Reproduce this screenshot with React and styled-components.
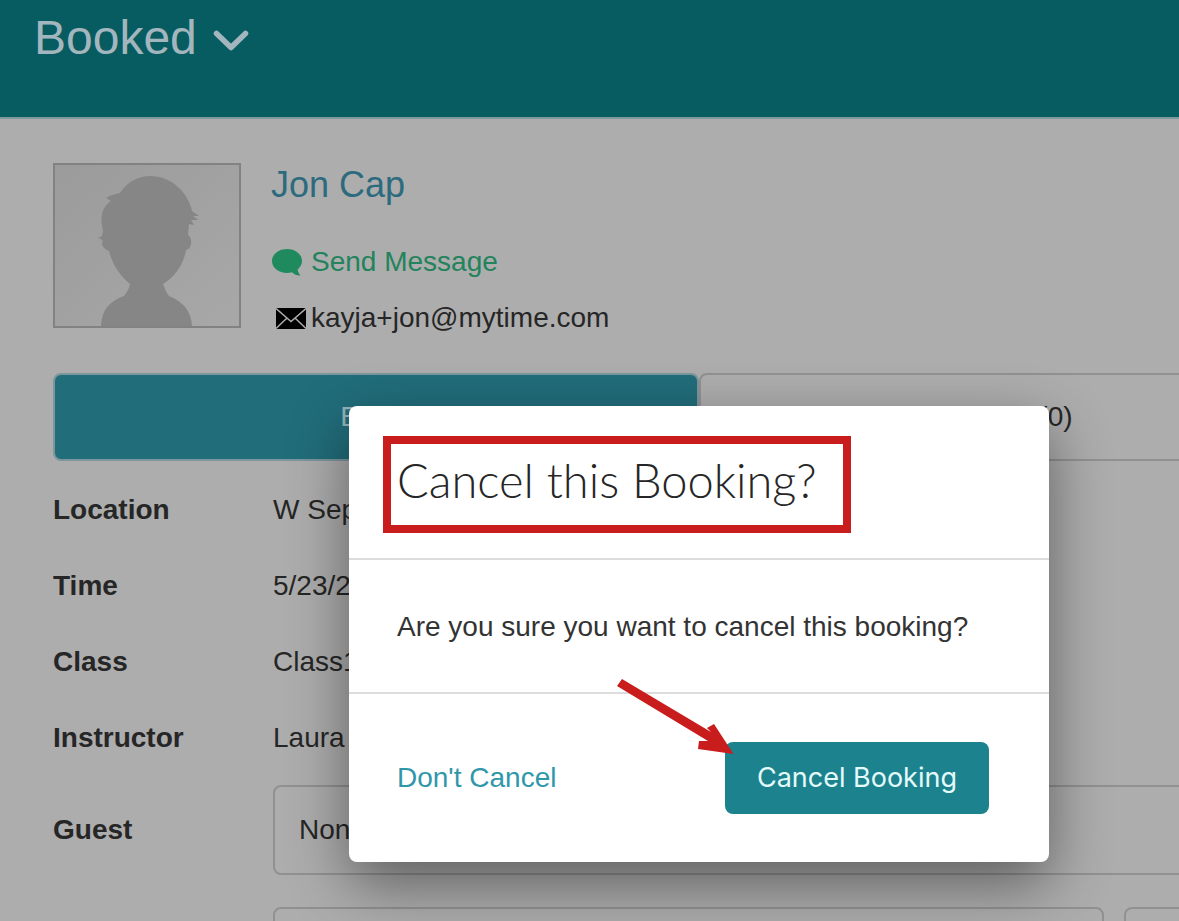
import React from "react";
import styled, { createGlobalStyle, css } from "styled-components";

const GlobalStyle = createGlobalStyle`
	:root{
		--app-sans: "Liberation Sans", Arial, sans-serif;
		--app-text: #262626;
		--app-page: #adadad;
		--app-header: #075c61;
		--app-link: #2c6b7e;
		--app-line: #919191;
		--app-mark: #c91c1c;
	}
	*{
		box-sizing: border-box;
	}
	body{
		margin: 0;
		background: var(--app-page);
		color: var(--app-text);
		font-family: var(--app-sans);
		font-size: 28px;
		line-height: 36px;
	}
	button, input, select{
		font: inherit;
		color: inherit;
	}
`

const Page = styled.div`
	position: relative;
	height: 100vh;
	overflow: hidden;
`

const Header = styled.header`
	height: 119px;
	padding: 10px 34px;
	background: var(--app-header);
	border-bottom: 2px solid #7f9a9d;
`

const StatusButton = styled.button`
	display: flex;
	align-items: center;
	gap: 16px;
	padding: 0;
	border: 0;
	background: none;
	color: #a3b6bd;
	font-size: 48px;
	line-height: 56px;
	svg{
		margin-top: 6px;
	}
`

/* the booking panel is wider than the viewport and runs off its right side */
const Content = styled.main`
	padding: 44px 0 0 53px;
	margin-right: -166px;
`

const Profile = styled.section`
	display: flex;
	gap: 30px;
	margin-bottom: 17px;
`

const Avatar = styled.svg`
	width: 188px;
	height: 165px;
	border: 2px solid #828282;
`

const ProfileInfo = styled.div`
	display: flex;
	flex-direction: column;
	align-items: flex-start;
`

const ClientName = styled.a`
	margin-bottom: 37px;
	color: var(--app-link);
	font-size: 36px;
	line-height: 44px;
	text-decoration: none;
`

const ContactLink = styled.a`
	display: flex;
	align-items: center;
	gap: ${({ $gap }) => $gap}px;
	padding-left: ${({ $indent = 0 }) => $indent}px;
	margin-bottom: 20px;
	color: ${({ $color }) => $color};
	text-decoration: none;
`

const Tabs = styled.div`
	display: grid;
	grid-template-columns: 1fr 1fr;
	margin-bottom: 31px;
`

const Tab = styled.button`
	height: 88px;
	border: 2px solid var(--app-line);
	border-radius: 8px;
	background: none;
	${({ $active }) => $active && css`
		border-color: #7c969d;
		background: #216d7a;
		color: #94b5bc;
	`}
`

const Details = styled.div`
	display: grid;
	row-gap: 40px;
`

const Row = styled.div`
	display: grid;
	grid-template-columns: 220px 1fr;
	align-items: center;
`

const Label = styled.label`
	font-weight: bold;
`

const field = css`
	appearance: none;
	width: 100%;
	height: 90px;
	padding: 0 24px;
	border: 2px solid var(--app-line);
	border-radius: 8px;
	background: transparent;
`

const Select = styled.select`
	${field}
`

const FieldRow = styled.div`
	grid-column: 2;
	display: grid;
	grid-template-columns: 831px 1fr;
	gap: 20px;
`

const TextInput = styled.input`
	${field}
`

const FormRows = styled.div`
	display: grid;
	row-gap: 32px;
	margin-top: -11px;
`

const Overlay = styled.div`
	position: absolute;
	inset: 0;
	padding-top: 406px;
	padding-left: 219px;
	display: flex;
	justify-content: center;
	align-items: flex-start;
`

const Modal = styled.div`
	width: 700px;
	border-radius: 8px;
	background: #fff;
	color: #333;
	box-shadow: 0 22px 60px rgba(0, 0, 0, 0.45);
`

const ModalHeader = styled.div`
	padding: 30px 34px 25px;
	border-bottom: 2px solid #dcdcdc;
`

const ModalTitle = styled.h2`
	width: fit-content;
	min-width: 468px;
	margin: 0;
	padding: 10px 6px 19px;
	border: 8px solid var(--app-mark);
	color: #262626;
	font-family: Lato, sans-serif;
	font-size: 47px;
	font-weight: 300;
	line-height: 52px;
`

const ModalBody = styled.div`
	padding: 49px 48px 47px;
	border-bottom: 2px solid #dcdcdc;
`

const ModalFooter = styled.div`
	position: relative;
	display: flex;
	justify-content: space-between;
	align-items: center;
	padding: 48px 60px 48px 48px;
`

const TextButton = styled.button`
	padding: 0;
	border: 0;
	background: none;
	color: #3097ab;
`

const PrimaryButton = styled.button`
	height: 72px;
	padding: 0 32px;
	border: 0;
	border-radius: 8px;
	background: #1c828d;
	color: #e4fbfc;
	font-family: Inter, sans-serif;
	font-size: 27px;
`

const Arrow = styled.svg`
	position: absolute;
	top: -16px;
	left: 266px;
`

const details = [
	{ label: "Location", value: "W Sep" },
	{ label: "Time", value: "5/23/2022" },
	{ label: "Class", value: "Class1" },
	{ label: "Instructor", value: "Laura" },
]

const ChevronIcon = () => (
	<svg width="36" height="22" viewBox="0 0 36 22" fill="none" aria-hidden="true">
		<path d="M3.5 3.5L18 17.5L32.5 3.5" stroke="currentColor" strokeWidth="5.5" strokeLinecap="round" strokeLinejoin="round" />
	</svg>
)

const BubbleIcon = () => (
	<svg width="30" height="27" viewBox="0 0 30 27" aria-hidden="true">
		<path d="M15 0C6.700 0 0 5.200 0 12C0 18.800 6.700 24 15 24C16.800 24 18.500 23.700 20 23.300C22.400 25.600 25.500 26.800 28.500 26.500C27 25 26 22.600 25.700 20.400C28.400 18.200 30 15.300 30 12C30 5.200 23.300 0 15 0Z" fill="#1f8a5e" />
	</svg>
)

const EnvelopeIcon = () => (
	<svg width="30" height="21" viewBox="0 0 30 21" aria-hidden="true">
		<rect width="30" height="21" fill="#000" />
		<path d="M0 0.500L15 13.500L30 0.500M0 20.500L11 10M30 20.500L19 10" fill="none" stroke="#adadad" strokeWidth="1.500" />
	</svg>
)

const AvatarImage = () => (
	<Avatar viewBox="0 0 184 161" role="img" aria-label="Jon Cap">
		<defs>
			<linearGradient id="backdrop" x1="0" y1="0" x2="1" y2="1">
				<stop offset="0" stopColor="#9b9b9b" />
				<stop offset="1" stopColor="#a8a8a8" />
			</linearGradient>
		</defs>
		<rect width="184" height="161" fill="url(#backdrop)" />
		<path
			d="M46 161C47 144 55 136 69 131C72 127 74 124 75 119C64 110 57 98 54 86C49 84 45 79 48 76L46 74L43 73L47 71L48 65C45 53 46 43 56 36L51 33C56 30 60 29 65 28C73 16 84 11 95 11C116 11 133 27 137 46L144 51L138 51L143 55L136 55L139 60L134 59L133 70C138 73 137 84 131 85C129 98 121 111 108 119C110 124 111 127 114 131C128 137 136 145 137 161Z"
			fill="#868686"
		/>
	</Avatar>
)

const CancelBookingModal = () => (
	<Overlay>
		<Modal role="dialog" aria-modal="true" aria-labelledby="modal-title">
			<ModalHeader>
				<ModalTitle id="modal-title">Cancel this Booking?</ModalTitle>
			</ModalHeader>
			<ModalBody>Are you sure you want to cancel this booking?</ModalBody>
			<ModalFooter>
				<TextButton type="button">Don't Cancel</TextButton>
				<PrimaryButton type="button">Cancel Booking</PrimaryButton>
				<Arrow width="120" height="80" viewBox="0 0 120 80" aria-hidden="true">
					<path d="M7 1L96 54L92 50L99 46L118.500 76L83 71L84 63L93 63L2 8Z" fill="#c91c1c" />
				</Arrow>
			</ModalFooter>
		</Modal>
	</Overlay>
)

const App = () => {
	return (
		<>
			<GlobalStyle />
			<Page>
				<Header>
					<StatusButton type="button">
						Booked
						<ChevronIcon />
					</StatusButton>
				</Header>
				<Content>
					<Profile>
						<AvatarImage />
						<ProfileInfo>
							<ClientName href="#client">Jon Cap</ClientName>
							<ContactLink href="#message" $gap={9} $indent={1} $color="#23835c">
								<BubbleIcon />
								Send Message
							</ContactLink>
							<ContactLink href="mailto:kayja+jon@mytime.com" $gap={5} $indent={5} $color="#262626">
								<EnvelopeIcon />
								kayja+jon@mytime.com
							</ContactLink>
						</ProfileInfo>
					</Profile>
					<Tabs>
						<Tab type="button" $active>Event</Tab>
						<Tab type="button">Files (0)</Tab>
					</Tabs>
					<Details>
						{details.map(({ label, value }) => (
							<Row key={label}>
								<Label as="span">{label}</Label>
								<span>{value}</span>
							</Row>
						))}
						<FormRows>
							<Row>
								<Label htmlFor="guest">Guest</Label>
								<Select id="guest" defaultValue="None">
									<option>None</option>
								</Select>
							</Row>
							<Row>
								<FieldRow>
									<TextInput aria-label="Guest name" />
									<TextInput aria-label="Guest count" />
								</FieldRow>
							</Row>
						</FormRows>
					</Details>
				</Content>
				<CancelBookingModal />
			</Page>
		</>
	)
}

export default App
